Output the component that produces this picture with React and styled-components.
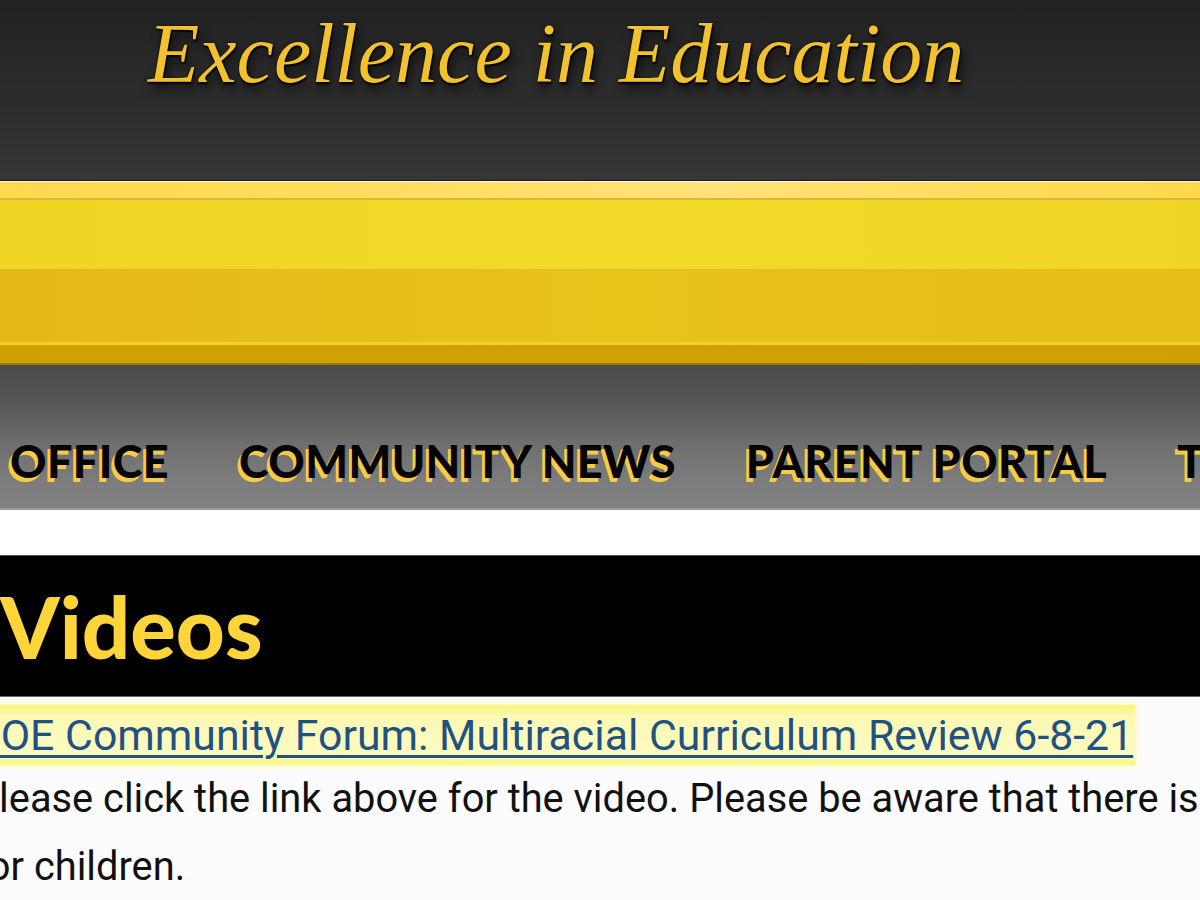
import React from 'react'
import styled, { createGlobalStyle } from 'styled-components'

const GlobalStyle = createGlobalStyle`
  html, body {
    margin: 0;
    padding: 0;
    background: #fcfcfc;
    overflow: hidden;
  }
  body {
    width: 1200px;
    height: 900px;
  }
`

const navItems = ['OFFICE', 'COMMUNITY NEWS', 'PARENT PORTAL', 'T']

function App() {
  return (
    <Page>
      <GlobalStyle />
      <Masthead>
        <Tagline>Excellence in Education</Tagline>
      </Masthead>
      <GoldBar>
        <GoldTop />
        <GoldUpper />
        <GoldLower />
        <GoldBottom />
      </GoldBar>
      <NavBar>
        {navItems.map(item => (
          <NavItem key={item}>{item}</NavItem>
        ))}
      </NavBar>
      <Spacer />
      <TitleBand>
        <Title>Videos</Title>
      </TitleBand>
      <Content>
        <LinkRow>
          <VideoLink href="#">BOE Community Forum: Multiracial Curriculum Review 6-8-21</VideoLink>
        </LinkRow>
        <Paragraph>
          Please click the link above for the video. Please be aware that there is
          <br />
          for children.
        </Paragraph>
      </Content>
    </Page>
  )
}
export default App

const Page = styled.div`
  width: 1200px;
  height: 900px;
  overflow: hidden;
  display: flex;
  flex-direction: column;
  background: #fcfcfc;
`

const Masthead = styled.header`
  height: 180px;
  flex-shrink: 0;
  box-sizing: border-box;
  padding-left: 148px;
  background: linear-gradient(180deg, #212121 0%, #2d2d2d 60%, #363636 100%);
`

const Tagline = styled.h1`
  margin: 0;
  padding-top: 4px;
  font-family: 'Liberation Serif', Georgia, serif;
  font-style: italic;
  font-weight: normal;
  font-size: 84px;
  line-height: 100px;
  color: #f2c12e;
  white-space: nowrap;
  text-shadow: 0 0 2px #000, 1px 2px 2px #000, 3px 8px 10px rgba(0, 0, 0, 0.6);
`

const GoldBar = styled.div`
  height: 185px;
  flex-shrink: 0;
  display: flex;
  flex-direction: column;
  border-top: 1px solid #1c1c1c;
  box-sizing: border-box;
`

const GoldTop = styled.div`
  height: 17px;
  border-bottom: 2px solid #dcb53a;
  box-shadow: inset 0 2px 1px -1px rgba(255, 255, 255, 0.9);
  background-image: linear-gradient(90deg, #ffd84f 0%, #ffdd5c 30%, #ffe27a 60%, #ffdd5c 80%, #ffd84a 100%);
`

const GoldUpper = styled.div`
  height: 69px;
  background: linear-gradient(90deg, #efd424 0%, #f1db28 50%, #efd526 100%);
`

const GoldLower = styled.div`
  height: 74px;
  background: linear-gradient(90deg, #e5b81a 0%, #e8c31a 50%, #e6bd19 100%);
  border-bottom: 3px solid #f0cf2e;
`

const GoldBottom = styled.div`
  height: 18px;
  background: linear-gradient(90deg, #cea000 0%, #d0a208 50%, #cea000 100%);
  border-bottom: 2px solid #9f7a08;
`

const NavBar = styled.nav`
  height: 145px;
  flex-shrink: 0;
  box-sizing: border-box;
  display: flex;
  align-items: flex-end;
  gap: 70px;
  padding: 0 0 24px 10px;
  white-space: nowrap;
  background: linear-gradient(180deg, #4b4b4b 0%, #555 25%, #6e6e6e 55%, #7c7c7c 80%, #828282 100%);
  border-bottom: 2px solid #9a9a9a;
`

const NavItem = styled.a`
  font-family: Lato, 'Open Sans', sans-serif;
  font-weight: 900;
  font-size: 45px;
  line-height: 1;
  color: #050505;
  letter-spacing: 0.4px;
  text-shadow: -3px 4px 0 #f7cc44;
`

const Spacer = styled.div`
  height: 45px;
  flex-shrink: 0;
  background: #fff;
`

const TitleBand = styled.div`
  height: 142px;
  flex-shrink: 0;
  box-sizing: border-box;
  display: flex;
  align-items: center;
  background: #000;
  border-top: 1px solid #555;
  border-bottom: 1px solid #666;
`

const Title = styled.h2`
  margin: 0;
  font-family: Lato, 'Open Sans', sans-serif;
  font-weight: 900;
  font-size: 85px;
  color: #fdd43a;
`

const Content = styled.main`
  margin-left: -26px;
  padding-top: 8px;
  font-family: Roboto, 'Noto Sans', sans-serif;
  white-space: nowrap;
`

const LinkRow = styled.div`
  display: flex;
`

const VideoLink = styled.a`
  display: inline-block;
  padding: 0 2px 0 0;
  font-size: 42.8px;
  line-height: 60px;
  color: #1f5283;
  text-decoration: underline;
  text-decoration-thickness: 3px;
  text-underline-offset: 5px;
  background: linear-gradient(180deg, #fbf47a 0%, #fcf8b4 18%, #fdfac0 80%, #fbf48a 100%);
  box-shadow: 0 0 4px 1px #fff9a0;
`

const Paragraph = styled.p`
  margin: 0;
  font-size: 39.8px;
  line-height: 68px;
  color: #111;
`
